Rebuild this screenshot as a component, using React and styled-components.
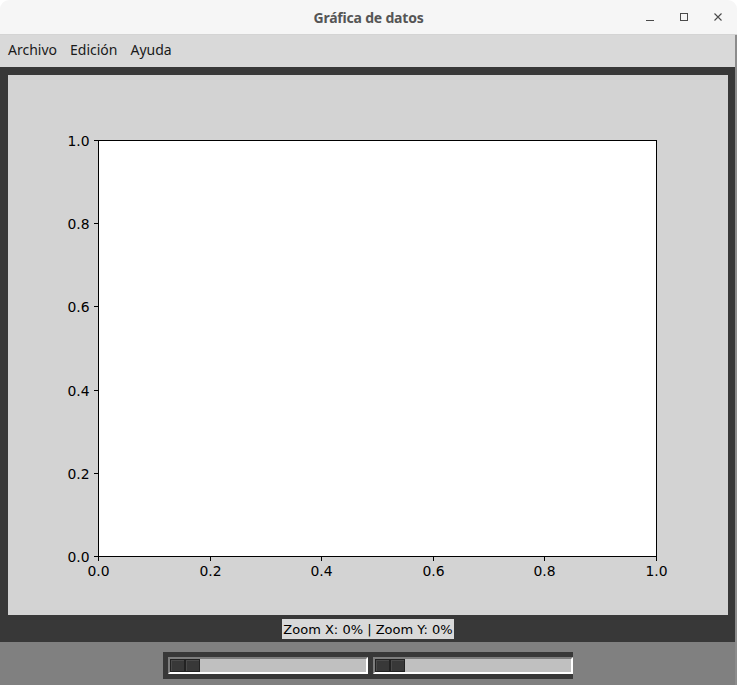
import React from 'react';
import styled, { createGlobalStyle } from 'styled-components';

const GlobalStyle = createGlobalStyle`
  html, body {
    margin: 0;
    padding: 0;
    background: #ffffff;
  }
`;

const Window = styled.div`
  width: 737px;
  height: 685px;
  display: flex;
  flex-direction: column;
  overflow: hidden;
`;

const TitleBar = styled.div`
  height: 34px;
  flex: none;
  display: flex;
  align-items: center;
  justify-content: center;
  position: relative;
  background: #f6f6f6;
  border-bottom: 1px solid #d4d4d4;
  border-radius: 9px 9px 0 0;
`;

const Title = styled.div`
  font-family: "Noto Sans", "DejaVu Sans", sans-serif;
  font-weight: 700;
  font-size: 14px;
  color: #555555;
  letter-spacing: -0.2px;
`;

const Controls = styled.div`
  position: absolute;
  right: 2px;
  top: 0;
  height: 34px;
  display: flex;
  align-items: center;
`;

const ControlButton = styled.div`
  width: 34px;
  height: 34px;
  display: flex;
  align-items: center;
  justify-content: center;
  color: #4a4a4a;
`;

const Body = styled.div`
  flex: 1;
  display: flex;
  flex-direction: column;
  border-right: 2px solid #8c8c8c;
`;

const MenuBar = styled.div`
  height: 32px;
  flex: none;
  display: flex;
  align-items: center;
  padding-left: 8px;
  padding-bottom: 2px;
  box-sizing: border-box;
  gap: 13px;
  background: #d9d9d9;
  font-family: "Noto Sans", "DejaVu Sans", sans-serif;
  font-size: 14px;
  color: #1a1a1a;
`;

const MenuItem = styled.span`
  line-height: 1;
`;

const Client = styled.div`
  display: flex;
  flex-direction: column;
  align-items: center;
  background: #383838;
  padding: 8px 7px 0 8px;
  height: 575px;
  box-sizing: border-box;
`;

const PlotPanel = styled.div`
  width: 720px;
  height: 540px;
  background: #d3d3d3;
  align-self: flex-start;
  display: flex;
`;

const StatusLabel = styled.div`
  margin-top: 4px;
  height: 20px;
  padding: 0 1px;
  display: flex;
  align-items: center;
  background: #d9d9d9;
  font-family: "DejaVu Sans", sans-serif;
  font-size: 13px;
  color: #000000;
`;

const Footer = styled.div`
  flex: 1;
  background: #808080;
  display: flex;
  justify-content: center;
  align-items: flex-start;
  padding-top: 10px;
`;

const ScaleGroup = styled.div`
  display: flex;
  gap: 5px;
  padding: 5px 0 5px 5px;
  background: #383838;
`;

const Scale = styled.div`
  width: 200px;
  height: 17px;
  box-sizing: border-box;
  background: #c0c0c0;
  border-style: solid;
  border-width: 2px;
  border-color: #7d7d7d #ffffff #ffffff #7d7d7d;
  display: flex;
  align-items: stretch;
`;

const Slider = styled.div`
  display: flex;
  width: 30px;
`;

const SliderHalf = styled.div`
  flex: 1;
  background: #383838;
  border: 1px solid #222222;
  box-shadow: inset 1px 1px 0 #4a4a4a;
`;

const AX = { left: 90.5, top: 65.5, right: 648.5, bottom: 481.5 };
const ticks = [0, 0.2, 0.4, 0.6, 0.8, 1.0];

const Plot = () => {
  const w = AX.right - AX.left;
  const h = AX.bottom - AX.top;
  const font = { fontFamily: '"DejaVu Sans", sans-serif', fontSize: 13.9, fill: '#000' };
  return (
    <svg width="720" height="540" viewBox="0 0 720 540">
      <rect x={AX.left} y={AX.top} width={w} height={h} fill="#ffffff" />
      <rect x={AX.left} y={AX.top} width={w} height={h} fill="none" stroke="#000" strokeWidth="1" />
      {ticks.map((t) => {
        const y = Math.round(AX.bottom - t * h - 0.5) + 0.5;
        const x = Math.round(AX.left + t * w - 0.5) + 0.5;
        return (
          <g key={t}>
            <line x1={AX.left - 4.5} y1={y} x2={AX.left} y2={y} stroke="#000" strokeWidth="1" />
            <text x={AX.left - 9} y={y + 5} textAnchor="end" {...font}>{t.toFixed(1)}</text>
            <line x1={x} y1={AX.bottom} x2={x} y2={AX.bottom + 4.5} stroke="#000" strokeWidth="1" />
            <text x={x} y={AX.bottom + 19.5} textAnchor="middle" {...font}>{t.toFixed(1)}</text>
          </g>
        );
      })}
    </svg>
  );
};

const App = () => (
  <Window>
    <GlobalStyle />
    <TitleBar>
      <Title>Gráfica de datos</Title>
      <Controls>
        <ControlButton>
          <svg width="10" height="10" viewBox="0 0 10 10">
            <line x1="1" y1="8.5" x2="9" y2="8.5" stroke="currentColor" strokeWidth="1" />
          </svg>
        </ControlButton>
        <ControlButton>
          <svg width="10" height="10" viewBox="0 0 10 10">
            <rect x="1.5" y="1.5" width="7" height="7" fill="none" stroke="currentColor" strokeWidth="1" />
          </svg>
        </ControlButton>
        <ControlButton>
          <svg width="10" height="10" viewBox="0 0 10 10">
            <path d="M1.5 1.5 L8.5 8.5 M8.5 1.5 L1.5 8.5" stroke="currentColor" strokeWidth="1.1" />
          </svg>
        </ControlButton>
      </Controls>
    </TitleBar>
    <Body>
      <MenuBar>
        <MenuItem>Archivo</MenuItem>
        <MenuItem>Edición</MenuItem>
        <MenuItem>Ayuda</MenuItem>
      </MenuBar>
      <Client>
        <PlotPanel>
          <Plot />
        </PlotPanel>
        <StatusLabel>Zoom X: 0% | Zoom Y: 0%</StatusLabel>
      </Client>
      <Footer>
        <ScaleGroup>
          <Scale>
            <Slider>
              <SliderHalf />
              <SliderHalf />
            </Slider>
          </Scale>
          <Scale>
            <Slider>
              <SliderHalf />
              <SliderHalf />
            </Slider>
          </Scale>
        </ScaleGroup>
      </Footer>
    </Body>
  </Window>
);

export default App;
